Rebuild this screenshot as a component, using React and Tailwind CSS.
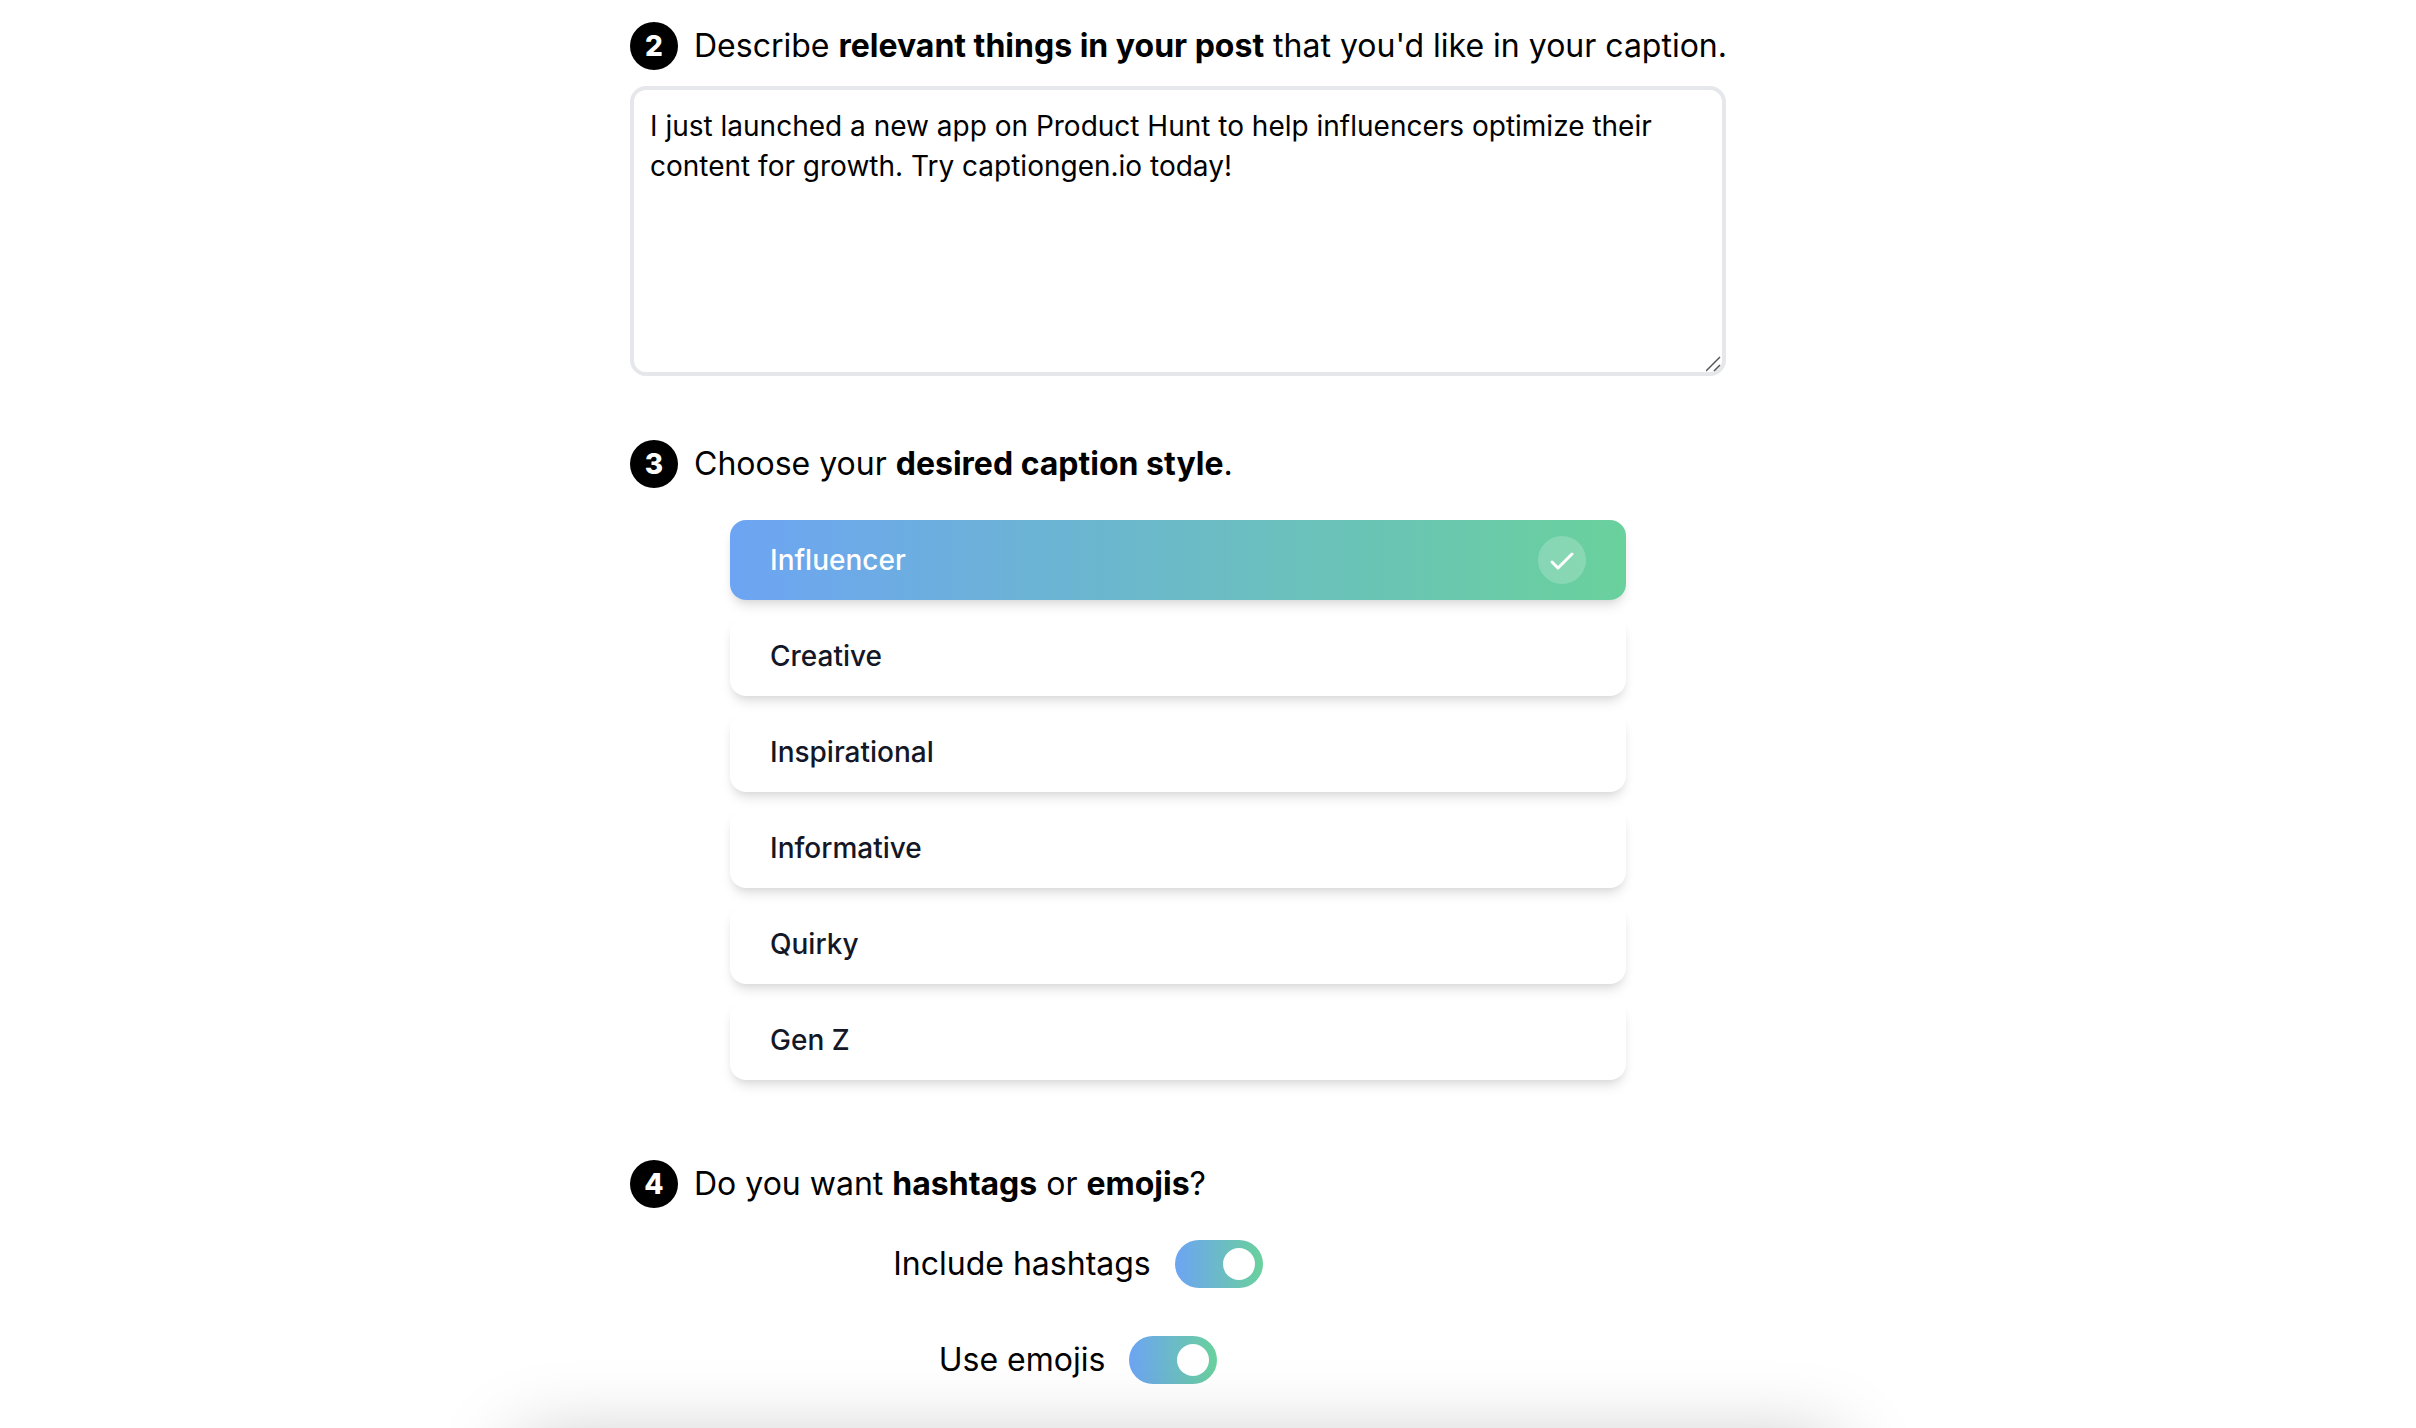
import { useState } from 'react';

const CAPTION_STYLES = [
  'Influencer',
  'Creative',
  'Inspirational',
  'Informative',
  'Quirky',
  'Gen Z',
];

function StepHeading({ step, children }) {
  return (
    <h2 className="flex items-center gap-4 text-[32px] leading-[48px]">
      <span className="flex size-12 shrink-0 items-center justify-center rounded-full bg-black text-[28px] font-extrabold text-white">
        {step}
      </span>
      <span className="xl:whitespace-nowrap">{children}</span>
    </h2>
  );
}

function CheckIcon() {
  return (
    <svg viewBox="0 0 24 24" fill="none" className="size-12 shrink-0" aria-hidden="true">
      <circle cx="12" cy="12" r="12" fill="#fff" opacity="0.2" />
      <path
        d="M7 13l3 3 7-7"
        stroke="#fff"
        strokeWidth="1.5"
        strokeLinecap="round"
        strokeLinejoin="round"
      />
    </svg>
  );
}

function StyleOption({ name, checked, onSelect }) {
  return (
    <label
      className={`flex h-20 cursor-pointer items-center justify-between rounded-2xl px-10 text-[28px] leading-10 font-medium shadow-[0_8px_12px_-2px_rgba(0,0,0,0.1),0_4px_8px_-4px_rgba(0,0,0,0.1)] ${
        checked
          ? 'bg-[linear-gradient(to_right,#6da4f3,#69d19c)] text-white'
          : 'bg-white text-[#131726]'
      }`}
    >
      <input
        type="radio"
        name="caption-style"
        value={name}
        checked={checked}
        onChange={() => onSelect(name)}
        className="sr-only"
      />
      {name}
      {checked && <CheckIcon />}
    </label>
  );
}

function Toggle({ label, checked, onChange }) {
  return (
    <label className="flex cursor-pointer items-center gap-6 text-[32px] leading-[48px]">
      {label}
      <input
        type="checkbox"
        role="switch"
        checked={checked}
        onChange={(e) => onChange(e.target.checked)}
        className="peer sr-only"
      />
      <span className="flex h-12 w-[88px] items-center rounded-full bg-gray-200 px-2 peer-checked:justify-end peer-checked:bg-[linear-gradient(to_right,#6da4f3,#69d19c)]">
        <span className="size-8 rounded-full bg-white" />
      </span>
    </label>
  );
}

export default function App() {
  const [description, setDescription] = useState(
    'I just launched a new app on Product Hunt to help influencers optimize their content for growth. Try captiongen.io today!'
  );
  const [captionStyle, setCaptionStyle] = useState('Influencer');
  const [hashtags, setHashtags] = useState(true);
  const [emojis, setEmojis] = useState(true);

  return (
    <div className="relative min-h-screen overflow-hidden bg-white pt-[22px] pr-[60px] pb-11 font-['Inter',sans-serif] text-black">
      <main className="mx-auto flex w-full max-w-[1096px] flex-col">
        <section className="flex flex-col gap-4">
          <StepHeading step={2}>
            Describe <strong className="font-bold">relevant things in your post</strong> that you'd
            like in your caption.
          </StepHeading>
          <div className="relative">
            <textarea
              aria-label="Describe your post"
              value={description}
              onChange={(e) => setDescription(e.target.value)}
              className="block h-[290px] w-full resize-none rounded-2xl border-4 border-[#e5e7eb] bg-white p-4 text-[28px] leading-10"
            />
            <svg
              viewBox="0 0 16 16"
              className="pointer-events-none absolute right-1 bottom-1 size-4"
              fill="none"
              stroke="#555"
              strokeWidth="1.5"
              aria-hidden="true"
            >
              <path d="M0 15L14 1M8 15l6-6" />
            </svg>
          </div>
        </section>

        <section className="mt-16 flex flex-col gap-8">
          <StepHeading step={3}>
            Choose your <strong className="font-bold">desired caption style</strong>.
          </StepHeading>
          <div
            role="radiogroup"
            aria-label="Caption style"
            className="mx-auto flex w-full max-w-4xl flex-col gap-4"
          >
            {CAPTION_STYLES.map((name) => (
              <StyleOption
                key={name}
                name={name}
                checked={name === captionStyle}
                onSelect={setCaptionStyle}
              />
            ))}
          </div>
        </section>

        <section className="mt-20 flex flex-col gap-8">
          <StepHeading step={4}>
            Do you want <strong className="font-bold">hashtags</strong> or{' '}
            <strong className="font-bold">emojis</strong>?
          </StepHeading>
          <div className="flex flex-col items-center gap-12 pr-[200px]">
            <Toggle label="Include hashtags" checked={hashtags} onChange={setHashtags} />
            <Toggle label="Use emojis" checked={emojis} onChange={setEmojis} />
          </div>
        </section>
      </main>

      {/* soft shadow cast upwards by the panel below the form */}
      <div className="pointer-events-none absolute inset-x-0 top-full pt-4 pr-[60px]">
        <div className="mx-auto h-60 w-full max-w-[1320px] rounded-2xl shadow-[0_0_80px_0_rgba(0,0,0,0.25)]" />
      </div>
    </div>
  );
}
